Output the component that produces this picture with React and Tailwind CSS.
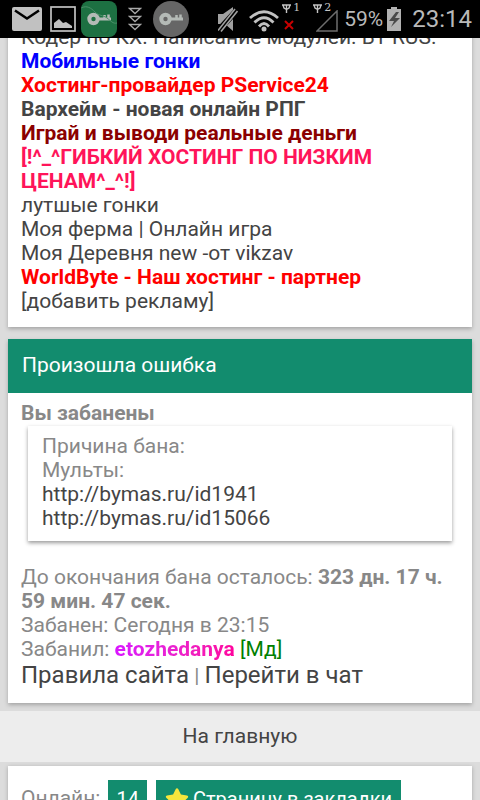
import { FaStar } from 'react-icons/fa'

const ads = [
  { text: 'Кодер по КХ. Написание модулей. ВТ RUS.', style: 'text-[#444444]' },
  { text: 'Мобильные гонки', style: 'font-bold text-[#0000ff]' },
  { text: 'Хостинг-провайдер PService24', style: 'font-bold text-[#ff0000]' },
  { text: 'Вархейм - новая онлайн РПГ', style: 'font-bold text-[#444444]' },
  { text: 'Играй и выводи реальные деньги', style: 'font-bold text-[#8b0000]' },
  { text: '[!^_^ГИБКИЙ ХОСТИНГ ПО НИЗКИМ ЦЕНАМ^_^!]', style: 'font-bold text-[#ff1459]' },
  { text: 'лутшые гонки', style: 'text-[#444444]' },
  { text: 'Моя ферма | Онлайн игра', style: 'text-[#444444]' },
  { text: 'Моя Деревня new -от vikzav', style: 'text-[#444444]' },
  { text: 'WorldByte - Наш хостинг - партнер', style: 'font-bold text-[#ff0000]' },
  { text: '[добавить рекламу]', style: 'text-[#444444]' },
]

function KeyIcon() {
  return (
    <svg viewBox="0 0 36 36" className="h-9 w-9" fill="none" stroke="#b4bab6">
      <circle cx="12.500" cy="18" r="4.200" strokeWidth="4" />
      <path d="M17 18H30" strokeWidth="3" />
      <path d="M23.500 18V14M27.500 18V13.500" strokeWidth="2.500" />
    </svg>
  )
}

function SimLabel({ number }) {
  return (
    <span className="flex h-3 items-center gap-[2px] font-['DejaVu_Serif',serif] text-[11px] leading-3 text-[#c4c4c4]">
      <svg viewBox="0 0 9 9" className="h-[9px] w-[9px]" fill="none" stroke="#c4c4c4" strokeWidth="1.400">
        <path d="M0 1h9M1 1l1 3 2.500 1.500L7 4l1-3M4.500 1v8" />
      </svg>
      {number}
    </span>
  )
}

function StatusBar() {
  return (
    <header className="relative z-10 flex h-[38px] shrink-0 items-center justify-between bg-black pr-2 pl-3 text-[#b9b9b9]">
      <div className="flex items-center">
        <svg viewBox="0 0 30 26" className="h-[26px] w-[30px]">
          <rect y="1" width="30" height="24" rx="2" fill="#c1c1c1" />
          <path d="M3 4.500l12 8 12-8" fill="none" stroke="#000" strokeWidth="2.500" />
        </svg>
        <svg viewBox="0 0 26 26" className="ml-2 h-[26px] w-[26px]">
          <rect x="1" y="1" width="24" height="24" fill="none" stroke="#c1c1c1" strokeWidth="1.700" />
          <path d="M4 22v-5l5-4 4 4 3-1 6 4v2z" fill="#c1c1c1" />
        </svg>
        <div className="relative ml-[5px] overflow-hidden rounded-lg bg-[#1d7042]">
          <svg viewBox="0 0 36 36" className="absolute inset-0 h-9 w-9" fill="none" stroke="#4c8f69">
            <path d="M0 7c6-3 10 0 14 4s8 3 12 6 6 6 10 5" />
          </svg>
          <KeyIcon />
        </div>
        <svg viewBox="0 0 14 24" className="ml-[11px] h-6 w-[14px]" fill="none" stroke="#a9a9a9" strokeWidth="1.300">
          <path d="M1.500 1.500h11l-5.500 5zM1.500 9.500h11l-5.500 5zM1.500 17.500h11l-5.500 5z" />
        </svg>
        <div className="ml-[11px] rounded-full bg-[#666666]">
          <KeyIcon />
        </div>
      </div>

      <div className="flex items-center">
        <svg viewBox="0 0 20 26" className="h-[26px] w-5">
          <path d="M0 8h5l10-7v24l-8-7H0z" fill="#a0a0a0" />
          <path d="M0 25L20 3" stroke="#000" strokeWidth="6" />
          <path d="M0 24.500L17 3M3 25.500L19.500 5" stroke="#a0a0a0" strokeWidth="1.600" />
        </svg>
        <svg viewBox="0 0 30 22" className="mt-1 ml-[11px] h-[22px] w-[30px]" fill="none" stroke="#c1c1c1" strokeWidth="2.800">
          <path d="M1 8Q15-4.500 29 8M5.500 12.500Q15 3 24.500 12.500M10 16.500Q15 10.500 20 16.500" />
          <circle cx="15" cy="19" r="2.500" fill="#c1c1c1" stroke="none" />
        </svg>
        <div className="ml-[3px] flex h-[34px] w-[18px] flex-col">
          <SimLabel number="1" />
          <svg viewBox="0 0 10 10" className="mt-[6px] ml-[2px] h-[10px] w-[10px]">
            <path d="M1 1l8 8M9 1l-8 8" stroke="#c80000" strokeWidth="2" />
          </svg>
        </div>
        <div className="ml-[13px] flex h-[34px] w-[25px] flex-col">
          <SimLabel number="2" />
          <svg viewBox="0 0 22 22" className="-mt-[4px] ml-[3px] h-[22px] w-[22px]">
            <path d="M21 1v20H1z" fill="none" stroke="#6d6d6d" strokeWidth="1.500" />
          </svg>
        </div>
        <span className="ml-[6px] text-[21px]">59%</span>
        <svg viewBox="0 0 14 24" className="ml-1 h-6 w-[14px]">
          <path d="M4 0h6v2h4v22H0V2h4z" fill="#b2b2b2" />
          <path d="M9 5l-7 9h5l-3 6 9-9H8l4-6z" fill="#4a4a4a" />
        </svg>
        <span className="ml-[11px] text-[24px] leading-6">23:14</span>
      </div>
    </header>
  )
}

export default function App() {
  return (
    <div className="flex h-screen flex-col overflow-hidden bg-[#dcdcdc] font-[Roboto,sans-serif] text-[21px] leading-6 text-[#888888]">
      <StatusBar />

      <main className="-mt-[13px] shrink-0">
        <section className="mx-2 bg-white px-[13px] pb-[14px] shadow-[0_2px_4px_rgba(0,0,0,0.25)]">
          <ul>
            {ads.map((ad) => (
              <li key={ad.text}>
                <a href="#" className={ad.style}>{ad.text}</a>
              </li>
            ))}
          </ul>
        </section>

        <section className="mx-2 mt-3 bg-white shadow-[0_2px_4px_rgba(0,0,0,0.25)]">
          <h1 className="bg-[#128c6e] px-[14px] pt-[14px] pb-4 text-white">Произошла ошибка</h1>
          <div className="px-[13px] pt-2 pb-[13px]">
            <p className="font-bold">Вы забанены</p>
            <div className="mx-[7px] mt-px mb-6 px-[14px] pt-2 pb-[11px] shadow-[0_2px_4px_rgba(0,0,0,0.4)]">
              <p>Причина бана:</p>
              <p>Мульты:</p>
              <p className="text-[#444444]">http://bymas.ru/id1941</p>
              <p className="text-[#444444]">http://bymas.ru/id15066</p>
            </div>
            <p>
              До окончания бана осталось: <b>323 дн. 17 ч. 59 мин. 47 сек.</b>
            </p>
            <p>Забанен: Сегодня в 23:15</p>
            <p>
              Забанил:{' '}
              <a href="#" className="bg-gradient-to-r from-[#d914ff] to-[#ff009c] bg-clip-text font-bold text-transparent">
                etozhedanya
              </a>{' '}
              <span className="text-[#008000]">[Мд]</span>
            </p>
            <p className="leading-7">
              <a href="#" className="text-[24px] text-[#444444]">Правила сайта</a>
              {' | '}
              <a href="#" className="text-[24px] text-[#444444]">Перейти в чат</a>
            </p>
          </div>
        </section>

        <a href="#" className="mt-2 block bg-[#ededed] pt-[13px] pb-[14px] text-center text-[#444444]">
          На главную
        </a>

        <footer className="mx-2 mt-1 flex bg-white px-[13px] pt-[14px] pb-4 shadow-[0_1px_4px_rgba(0,0,0,0.25)]">
          <span className="pt-[6px]">Онлайн:</span>
          <a href="#" className="ml-2 bg-[#128c6e] px-2 py-[7px] text-[20px] leading-6 text-white">14</a>
          <button type="button" className="ml-[9px] flex items-center bg-[#128c6e] px-[9px] py-[7px] text-[20px] leading-6 text-white">
            <FaStar className="mr-1 h-6 w-6 text-[#f5e63c]" />
            Страницу в закладки
          </button>
        </footer>
      </main>
    </div>
  )
}
